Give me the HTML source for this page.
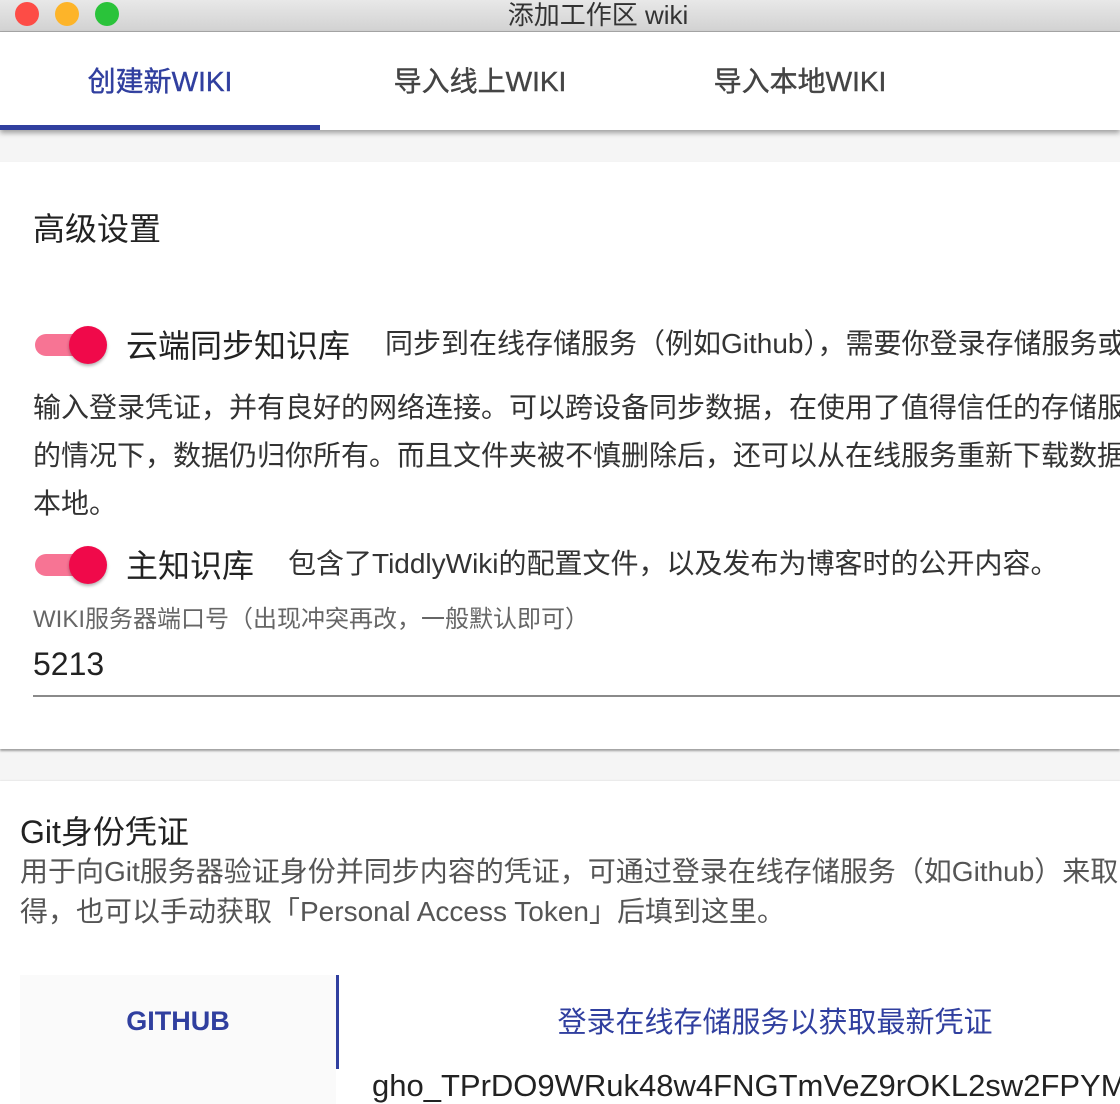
<!DOCTYPE html>
<html><head><meta charset="utf-8"><style>
*{margin:0;padding:0;box-sizing:border-box}
html,body{width:1120px;height:1104px;overflow:hidden;background:#f5f5f5;font-family:"Liberation Sans","Noto Sans CJK SC",sans-serif;color:#222}
.a{position:absolute;white-space:nowrap}
.title{left:0;top:0;width:1120px;height:32px;background:linear-gradient(#e8e8e8,#d2d2d2);border-bottom:1px solid #a8a8a8}
.dot{position:absolute;top:2px;width:24px;height:24px;border-radius:50%}
.tabs{left:0;top:32px;width:1120px;height:98px;background:#fff;box-shadow:0 3px 5px rgba(0,0,0,.35)}
.tab{position:absolute;top:0;width:320px;height:98px;line-height:100px;text-align:center;font-size:28px;color:#444;-webkit-text-stroke:0.4px currentColor}
.card{left:0;width:1120px;background:#fff}
.sw{position:absolute;width:74px;height:40px}
.sw .tr{position:absolute;left:2px;top:12px;width:62px;height:22px;border-radius:11px;background:#f77494}
.sw .th{position:absolute;left:36px;top:4px;width:38px;height:38px;border-radius:50%;background:#f0094a;box-shadow:0 2px 3px rgba(0,0,0,.3)}
</style></head><body>
<div class="a title">
<div class="dot" style="left:15px;background:#fd4c46"></div>
<div class="dot" style="left:55px;background:#fdb429"></div>
<div class="dot" style="left:95px;background:#2ac33a"></div>
<div class="a" style="left:0;width:1196px;text-align:center;top:-5px;font-size:26px;color:#333">添加工作区 wiki</div>
</div>
<div class="a tabs">
<div class="tab" style="left:0;color:#303f9f">创建新WIKI</div>
<div class="tab" style="left:320px">导入线上WIKI</div>
<div class="tab" style="left:640px">导入本地WIKI</div>
<div class="a" style="left:0;top:93px;width:320px;height:5px;background:#303f9f"></div>
</div>
<div class="a card" style="top:162px;height:587px;box-shadow:0 2px 2px rgba(0,0,0,.35)"></div>
<div class="a" style="left:33px;top:204px;font-size:32px;color:#222">高级设置</div>
<div class="sw" style="left:33px;top:322px"><div class="tr"></div><div class="th"></div></div>
<div class="a" style="left:126px;top:321px;font-size:32px;color:#222">云端同步知识库</div>
<div class="a" style="left:385px;top:322px;font-size:28px;color:#333">同步到在线存储服务（例如Github），需要你登录存储服务或</div>
<div class="a" style="left:33px;top:384px;font-size:28px;color:#333;line-height:48px">输入登录凭证，并有良好的网络连接。可以跨设备同步数据，在使用了值得信任的存储服务<br>的情况下，数据仍归你所有。而且文件夹被不慎删除后，还可以从在线服务重新下载数据到<br>本地。</div>
<div class="sw" style="left:33px;top:542px"><div class="tr"></div><div class="th"></div></div>
<div class="a" style="left:126px;top:541px;font-size:32px;color:#222">主知识库</div>
<div class="a" style="left:288px;top:542px;font-size:28px;color:#333">包含了TiddlyWiki的配置文件，以及发布为博客时的公开内容。</div>
<div class="a" style="left:33px;top:599px;font-size:24px;color:#666">WIKI服务器端口号（出现冲突再改，一般默认即可）</div>
<div class="a" style="left:33px;top:646px;font-size:32px;color:#222">5213</div>
<div class="a" style="left:33px;top:695px;width:1087px;height:2px;background:#8a8a8a"></div>
<div class="a card" style="top:781px;height:323px;box-shadow:0 -1px 1px rgba(0,0,0,.05)"></div>
<div class="a" style="left:20px;top:807px;font-size:32px;color:#222">Git身份凭证</div>
<div class="a" style="left:20px;top:852px;font-size:28px;color:#555;line-height:40px">用于向Git服务器验证身份并同步内容的凭证，可通过登录在线存储服务（如Github）来取<br>得，也可以手动获取「Personal Access Token」后填到这里。</div>
<div class="a" style="left:20px;top:975px;width:316px;height:129px;background:#fafafa"></div>
<div class="a" style="left:20px;top:1006px;width:316px;text-align:center;font-size:27px;color:#303f9f;font-weight:bold">GITHUB</div>
<div class="a" style="left:336px;top:975px;width:3px;height:94px;background:#303f9f"></div>
<div class="a" style="left:440px;top:999px;width:670px;text-align:center;font-size:29px;color:#303f9f">登录在线存储服务以获取最新凭证</div>
<div class="a" style="left:372px;top:1068px;font-size:31px;color:#222">gho_TPrDO9WRuk48w4FNGTmVeZ9rOKL2sw2FPYM</div>
</body></html>
